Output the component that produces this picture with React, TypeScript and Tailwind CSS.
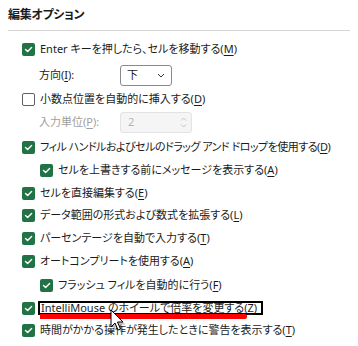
import type { ReactNode } from "react"

const font = "font-['Noto_Sans','Noto_Sans_CJK_JP',sans-serif] [font-feature-settings:'palt']"

function Check({ checked = true }: { checked?: boolean }) {
  if (!checked) {
    return <span className="inline-block h-[13px] w-[13px] shrink-0 rounded-[2px] border border-[#5f5f5f] bg-white" />
  }
  return (
    <span className="flex h-[13px] w-[13px] shrink-0 items-center justify-center rounded-[2px] bg-[#217346]">
      <svg width="9" height="9" viewBox="0 0 9 9" fill="none">
        <path d="M1.5 4.6 L3.6 6.6 L7.6 2.4" stroke="white" strokeWidth="1.4" strokeLinecap="round" strokeLinejoin="round" />
      </svg>
    </span>
  )
}

function Key({ k }: { k: string }) {
  return (
    <>
      (<span className="underline underline-offset-2">{k}</span>)
    </>
  )
}

function Row({ h, indent = false, checked = true, tight = false, children }: { h: string; indent?: boolean; checked?: boolean; tight?: boolean; children: ReactNode }) {
  return (
    <div className={`flex items-center gap-[5px] ${h} ${indent ? "pl-[18px]" : ""}`}>
      <Check checked={checked} />
      <span className={`whitespace-nowrap ${tight ? "tracking-[-0.5px]" : ""}`}>{children}</span>
    </div>
  )
}

export default function App() {
  return (
    <div className={`relative h-[346px] w-[358px] overflow-hidden bg-white text-[11px] text-[#1b1b1b] ${font}`}>
      <div className="flex h-[30px] items-center px-2 text-[12px] font-semibold tracking-[-0.3px]">編集オプション</div>
      <div className="mx-2 h-px bg-[#d5d5d5]" />

      <div className="pl-[22px] pt-[5px]">
        <Row h="h-[26px]">
          Enter キーを押したら、セルを移動する<Key k="M" />
        </Row>

        <div className="flex h-[26px] items-center pl-[17px]">
          <span className="w-[81px]">
            方向<Key k="I" />:
          </span>
          <div className="flex h-[21px] w-[52px] items-center justify-between rounded-[3px] border border-[#8a8a8a] pl-[6px] pr-[6px]">
            <span>下</span>
            <svg width="8" height="5" viewBox="0 0 8 5" fill="none">
              <path d="M1 1 L4 4 L7 1" stroke="#333" strokeWidth="1" />
            </svg>
          </div>
        </div>

        <Row h="h-[22px]" checked={false}>
          小数点位置を自動的に挿入する<Key k="D" />
        </Row>

        <div className="flex h-[25px] items-center pl-[17px] text-[#a0a0a0]">
          <span className="w-[81px]">
            入力単位<Key k="P" />:
          </span>
          <div className="flex h-[21px] w-[72px] items-center justify-between rounded-[3px] border border-[#e3e3e3] bg-[#f5f5f5] pl-[7px] pr-[4px] text-[#b5b5b5]">
            <span>2</span>
            <div className="flex flex-col gap-[3px]">
              <svg width="7" height="4" viewBox="0 0 7 4" fill="none">
                <path d="M1 3.5 L3.5 1 L6 3.5" stroke="#c4c4c4" strokeWidth="1" />
              </svg>
              <svg width="7" height="4" viewBox="0 0 7 4" fill="none">
                <path d="M1 0.5 L3.5 3 L6 0.5" stroke="#c4c4c4" strokeWidth="1" />
              </svg>
            </div>
          </div>
        </div>

        <Row h="h-[24px]" tight>
          フィル ハンドルおよびセルのドラッグ アンド ドロップを使用する<Key k="D" />
        </Row>
        <Row h="h-[23px]" indent>
          セルを上書きする前にメッセージを表示する<Key k="A" />
        </Row>
        <Row h="h-[22px]">
          セルを直接編集する<Key k="E" />
        </Row>
        <Row h="h-[23px]">
          データ範囲の形式および数式を拡張する<Key k="L" />
        </Row>
        <Row h="h-[23px]">
          パーセンテージを自動で入力する<Key k="T" />
        </Row>
        <Row h="h-[23px]">
          オートコンプリートを使用する<Key k="A" />
        </Row>
        <Row h="h-[24px]" indent>
          フラッシュ フィルを自動的に行う<Key k="F" />
        </Row>

        <div className="relative flex h-[22px] items-center gap-[3px]">
          <Check />
          <span className="whitespace-nowrap border-2 border-black pl-[1px] pr-[4px] leading-[10px]">
            IntelliMouse のホイールで倍率を変更する<Key k="Z" />
          </span>
          <div className="absolute left-[18px] top-[17px] h-[5px] w-[207px] rounded-r-[2px] bg-[#ff0000]" />
        </div>

        <Row h="h-[23px]">
          時間がかかる操作が発生したときに警告を表示する<Key k="T" />
        </Row>
      </div>

      <svg className="absolute left-[110px] top-[309px]" width="16" height="24" viewBox="0 0 16 24">
        <path d="M2 2 L2 19 L6 15 L9 22 L11.5 21 L8.5 14 L14 14 Z" fill="#000" opacity="0.25" transform="translate(1.5,1.5)" />
        <path d="M1 1 L1 18 L5 14 L8 21 L10.5 20 L7.5 13 L13 13 Z" fill="white" stroke="black" strokeWidth="1" strokeLinejoin="round" />
      </svg>
    </div>
  )
}
